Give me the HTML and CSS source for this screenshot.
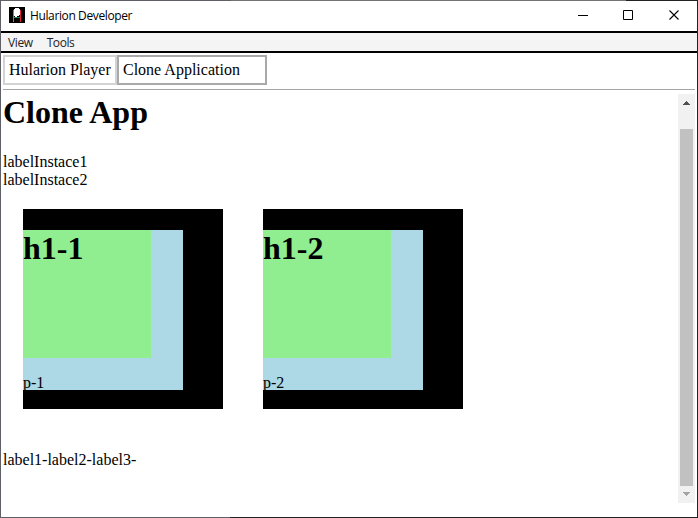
FILE: index.html
```html
<!DOCTYPE html>
<html lang="en">
<head>
<meta charset="utf-8">
<title>Hularion Developer</title>
<link rel="stylesheet" href="styles.css">
</head>
<body>
<div class="window">
  <div class="edge-top"></div>
  <header class="titlebar">
    <svg class="logo" width="16" height="16" viewBox="0 0 16 16" shape-rendering="crispEdges">
      <rect width="16" height="16" fill="#000"/>
      <path d="M4 3h1v12h-1z" fill="#2ba5c4"/>
      <path d="M11 3h1v12h-1z" fill="#e8202a"/>
      <path d="M5 10h6v1h-6z" fill="#1c8a5c"/>
      <path d="M6 1h4v1h1v6h-1v1h-2v1h-2v-1h-1v-7h1z" fill="#fff"/>
    </svg>
    <span class="title">Hularion Developer</span>
    <svg class="controls" width="103" height="11" viewBox="0 0 103 11" fill="none" stroke="#000">
      <path d="M0 5.5h10"/>
      <path d="M45.5 .5h9v9h-9z"/>
      <path d="M91.5 .5l9 9M100.5 .5l-9 9" stroke-width="1.1"/>
    </svg>
  </header>
  <nav class="menu"><span class="view">View</span><span class="tools">Tools</span></nav>
  <div class="tabs">
    <div class="tab">Hularion Player</div>
    <div class="tab selected">Clone Application</div>
  </div>
  <div class="pane">
    <main class="content">
      <h1>Clone App</h1>
      <div class="labels"><div>labelInstace1</div><div>labelInstace2</div></div>
      <div class="boxes">
        <section class="outer"><div class="middle"><div class="inner"><h1>h1-1</h1></div><p>p-1</p></div></section>
        <section class="outer"><div class="middle"><div class="inner"><h1>h1-2</h1></div><p>p-2</p></div></section>
      </div>
      <div class="footer-labels">label1-label2-label3-</div>
    </main>
    <div class="scrollbar">
      <svg width="17" height="35" viewBox="0 0 17 35" shape-rendering="crispEdges"><path d="M8 7h1v1h1v1h1v1h1v1h-7v-1h1v-1h1v-1h1z" fill="#505050"/></svg>
      <div class="thumb"></div>
      <svg width="17" height="17" viewBox="0 0 17 17" shape-rendering="crispEdges"><path d="M5 6h7v1h-1v1h-1v1h-1v1h-1v-1h-1v-1h-1v-1h-1z" fill="#a3a3a3"/></svg>
    </div>
  </div>
  <div class="edge-bottom"></div>
</div>
</body>
</html>
```
FILE: styles.css
```css
* { box-sizing: border-box; }
body { margin: 0; background: #fff; color: #000; font: 16px/18px "Liberation Serif", serif; overflow: hidden; }
.window { width: 698px; height: 518px; display: flex; flex-direction: column; border-left: 1px solid #5f5f66; border-right: 1px solid #222; }
.edge-top { height: 1px; background: linear-gradient(90deg, #5f5f66 230px, #747474 230px, #747474 625px, #222 625px); }
.edge-bottom { height: 1px; margin-top: auto; background: linear-gradient(90deg, #5f5f66 229px, #222 229px); }
.titlebar { height: 30px; display: flex; align-items: flex-start; padding: 6px 16px 0 8px; }
.title { font: 12px/18px "Open Sans", sans-serif; letter-spacing: -.38px; margin-left: 5px; white-space: nowrap; }
.controls { margin: 3px 0 0 auto; }
.menu { height: 22px; background: #f4f4f4; border-top: 2px solid #000; border-bottom: 2px solid #000; padding-left: 7px; font: 12px/20px "Open Sans", sans-serif; color: #222; display: flex; gap: 14px; letter-spacing: -.4px; }
.tabs { margin: 2px 2px 0; height: 35px; border-bottom: 1px solid #a5a5a5; display: flex; }
.tab { width: 114px; height: 30px; border: 2px solid #d3d3d3; padding: 4px; white-space: nowrap; }
.tab.selected { width: 150px; border-color: #a9a9a9; }
.pane { display: flex; height: 409px; margin: 4px 2px 0; }
.content { flex: 1; }
h1 { margin: 0; font-size: 32px; line-height: 37px; font-weight: bold; }
.labels { margin-top: 22px; }
.boxes { display: flex; gap: 40px; margin: 20px 20px 42px; }
.outer { width: 200px; height: 200px; background: #000; padding-top: 21px; }
.middle { width: 160px; height: 160px; background: lightblue; }
.inner { width: 128px; height: 128px; background: lightgreen; }
p { margin: 16px 0 0; }
.scrollbar { width: 17px; background: #f1f1f1; display: flex; flex-direction: column; }
.scrollbar svg { display: block; }
.thumb { width: 13px; height: 357px; margin: 0 2px; background: #c1c1c1; }
```
